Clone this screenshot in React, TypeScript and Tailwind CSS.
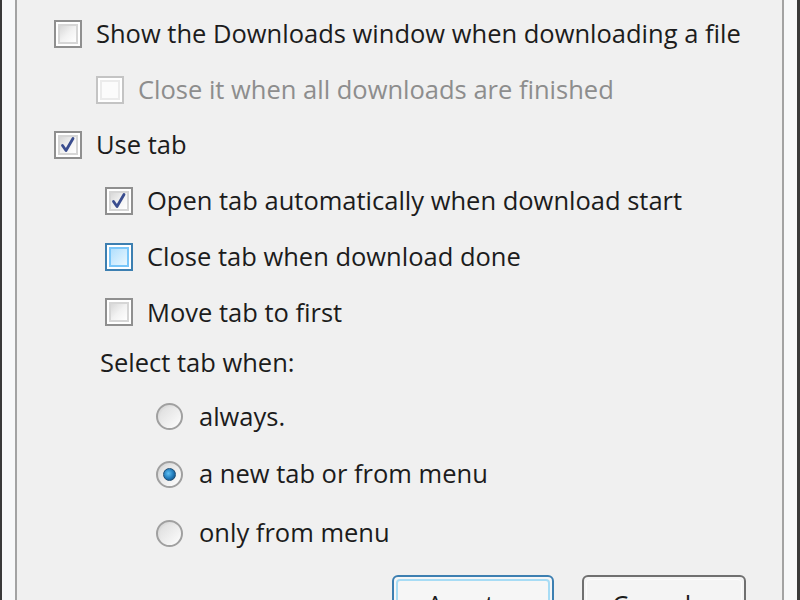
import React from "react";

function Check({ checked = false, hover = false, disabled = false }: { checked?: boolean; hover?: boolean; disabled?: boolean }) {
  const outer = hover ? "border-[#3c7fb1]" : disabled ? "border-[#c4c4c4]" : "border-[#8f8f8f]";
  const inner = hover
    ? "border-[#79c6f9] bg-gradient-to-br from-[#b1dffd] to-[#e9f7fe]"
    : disabled
    ? "border-[#ebebeb] bg-[#fbfbfb]"
    : "border-[#d6d6d6] bg-gradient-to-br from-[#d8d8d8] via-[#f2f2f2] to-[#ffffff]";
  return (
    <div className={`relative w-[28px] h-[28px] shrink-0 border-2 ${outer} bg-white p-[2px]`}>
      <div className={`w-full h-full border-2 ${inner}`} />
      {checked && (
        <svg className="absolute inset-0" width="24" height="24" viewBox="0 0 24 24">
          <path d="M6.5 12.5 L10 17.5 L17 5.5" fill="none" stroke="#3a4d8f" strokeWidth="2.8" strokeLinejoin="round" strokeLinecap="round" />
        </svg>
      )}
    </div>
  );
}

function Radio({ checked = false }: { checked?: boolean }) {
  return (
    <div className="relative w-[27px] h-[27px] shrink-0 rounded-full border-2 border-[#a0a0a0] bg-gradient-to-br from-[#d2d2d2] via-[#ececec] to-[#ffffff] flex items-center justify-center">
      <div className="w-[19px] h-[19px] rounded-full bg-gradient-to-br from-[#dedede] to-[#fbfbfb] flex items-center justify-center">
        {checked && (
          <div className="w-[13px] h-[13px] rounded-full border border-[#1d4d75] bg-[radial-gradient(circle_at_40%_40%,#5fc0f4,#1f78b8_55%,#153f66)]" />
        )}
      </div>
    </div>
  );
}

const font = "font-['Open_Sans','Noto_Sans',sans-serif]";

export default function App() {
  return (
    <div className={`w-[800px] h-[600px] overflow-hidden bg-[#f7f8f9] border-l-2 border-r-[3px] border-[#3a3a3a] ${font}`}>
      <div className="h-full ml-[13px] mr-[13px] border-x-2 border-[#a3a3a3] bg-[#f0f0f0] text-[#1c1c1c] text-[25.5px] leading-none">
        <div className="pt-[6px] pl-[37px]">
          <div className="h-[55.7px] flex items-center gap-[14px]">
            <Check />
            <span>Show the Downloads window when downloading a file</span>
          </div>
          <div className="h-[55.7px] flex items-center gap-[14px] pl-[42px] text-[#8d8d8d]">
            <Check disabled />
            <span>Close it when all downloads are finished</span>
          </div>
          <div className="h-[55.7px] flex items-center gap-[14px]">
            <Check checked />
            <span>Use tab</span>
          </div>
          <div className="h-[55.7px] flex items-center gap-[14px] pl-[51px]">
            <Check checked />
            <span>Open tab automatically when download start</span>
          </div>
          <div className="h-[55.7px] flex items-center gap-[14px] pl-[51px]">
            <Check hover />
            <span>Close tab when download done</span>
          </div>
          <div className="h-[55.7px] flex items-center gap-[14px] pl-[51px]">
            <Check />
            <span>Move tab to first</span>
          </div>
          <div className="h-[45px] flex items-center pl-[46px]">
            <span>Select tab when:</span>
          </div>
          <div className="h-[63px] flex items-center gap-[16px] pl-[102px]">
            <Radio />
            <span>always.</span>
          </div>
          <div className="h-[52px] flex items-center gap-[16px] pl-[102px]">
            <Radio checked />
            <span>a new tab or from menu</span>
          </div>
          <div className="h-[66px] flex items-center gap-[16px] pl-[102px]">
            <Radio />
            <span>only from menu</span>
          </div>
          <div className="flex gap-[28px] pl-[338px] mt-[9px]">
            <div className="w-[162px] h-[46px] rounded-[6px] border-2 border-[#3c7fb1] p-[2px] bg-[#f6f6f6]">
              <div className="w-full h-full rounded-[4px] border-2 border-[#a7dcf5] flex justify-center pt-[11px]">
                Aceptar
              </div>
            </div>
            <div className="w-[164px] h-[46px] rounded-[6px] border-2 border-[#707070] p-[2px] bg-[#f4f4f4]">
              <div className="w-full h-full rounded-[4px] border border-[#fcfcfc] flex justify-center pt-[12px]">
                Cancelar
              </div>
            </div>
          </div>
        </div>
      </div>
    </div>
  );
}
